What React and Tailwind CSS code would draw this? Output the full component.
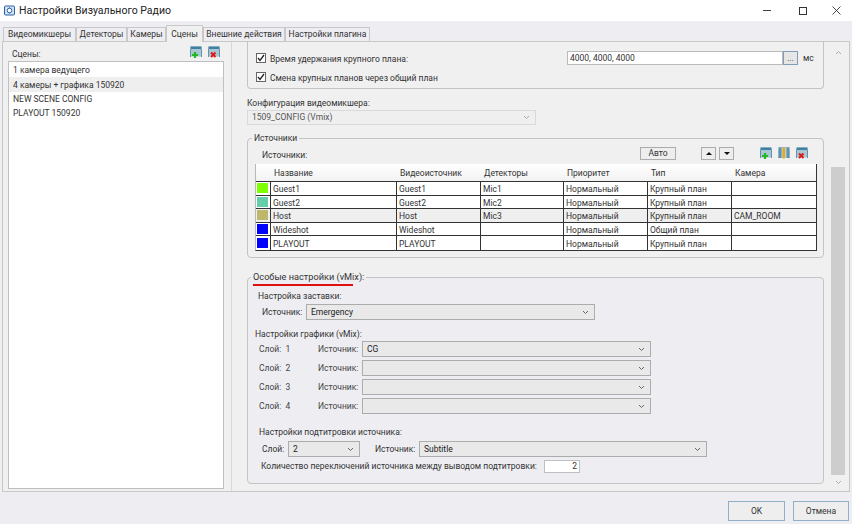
const font = { fontFamily: 'Roboto,"Noto Sans",sans-serif' };

function TableIcon({ kind }) {
  return (
    <svg width="13" height="12" viewBox="0 0 13 12" className="block">
      <rect x="0.500" y="0.500" width="11" height="10" fill="#a9c6d2" />
      <rect x="0.500" y="0.500" width="11" height="2.500" fill="#3f7f9f" />
      <path d="M.5 3v8M11.500 3v8" stroke="#5f93ab" />
      {kind === "add" && <path d="M2 9h6M5 6v6" stroke="#22b822" strokeWidth="2.200" />}
      {kind === "del" && <path d="M3 6.500l4.500 4.500M7.500 6.500L3 11" stroke="#e01818" strokeWidth="2" />}
      {kind === "cols" && (
        <>
          <rect x="0.500" y="0.500" width="11" height="10" fill="#b9d0da" />
          <rect x="1" y="0.500" width="2.500" height="10.500" fill="#5f93ab" />
          <rect x="4.500" y="0.500" width="2.500" height="11" fill="#eaa81c" />
          <rect x="8.500" y="0.500" width="2.500" height="10.500" fill="#5f93ab" />
        </>
      )}
    </svg>
  );
}

function Chevron({ color = "#666" }) {
  return (
    <svg width="7" height="5" viewBox="0 0 7 5" className="block shrink-0">
      <path d="M1 1l2.500 2.500L6 1" fill="none" stroke={color} strokeWidth="1" />
    </svg>
  );
}

function Select({ width, value, disabled }) {
  return (
    <div
      className={`flex items-center justify-between border pl-1 pr-[5px] ${
        disabled ? "border-[#d9d9d9] bg-[#efefef] text-[#555]" : "border-[#acacac] bg-[#e9e9e9] text-[#222]"
      } ${width}`}
    >
      <span className="leading-none">{value}</span>
      <Chevron color={disabled ? "#aaa" : "#666"} />
    </div>
  );
}

function Checkbox() {
  return (
    <span className="flex h-[10px] w-[10px] items-center justify-center border border-[#666] bg-white">
      <svg width="8" height="8" viewBox="0 0 8 8">
        <path d="M1 4l2 2.500L7 1" fill="none" stroke="#222" strokeWidth="1.300" />
      </svg>
    </span>
  );
}

const cols = "grid-cols-[15px_126px_84px_83px_84px_84px_85px]";
const headers = ["", "Название", "Видеоисточник", "Детекторы", "Приоритет", "Тип", "Камера"];
const rows = [
  ["#7fff00", "Guest1", "Guest1", "Mic1", "Нормальный", "Крупный план", ""],
  ["#66cdaa", "Guest2", "Guest2", "Mic2", "Нормальный", "Крупный план", ""],
  ["#bdb76b", "Host", "Host", "Mic3", "Нормальный", "Крупный план", "CAM_ROOM"],
  ["#0000ff", "Wideshot", "Wideshot", "", "Нормальный", "Общий план", ""],
  ["#0000ff", "PLAYOUT", "PLAYOUT", "", "Нормальный", "Крупный план", ""],
];

function SourcesTable() {
  return (
    <div className="ml-[7px] mt-[3px] w-[562px] border-r border-b border-l border-[#333] border-l-[#b8b8b8] bg-white">
      <div className={`grid h-[18px] ${cols} border-b border-[#333] bg-gradient-to-b from-white to-[#f2f2f2]`}>
        {headers.map((h, i) => (
          <div key={i} className="flex items-center pl-[3px] pt-[2px] text-[#333]">{h}</div>
        ))}
      </div>
      {rows.map((r, ri) => (
        <div
          key={ri}
          className={`grid h-[13.5px] ${cols} border-b border-[#333] ${ri === 2 ? "bg-[#efefef]" : "bg-white"} ${ri === 4 ? "border-b-0" : ""}`}
        >
          <div className="flex items-center border-r border-[#333] pl-[1px]">
            <span className="block h-[10px] w-[11px]" style={{ background: r[0] }} />
          </div>
          {r.slice(1).map((c, i) => (
            <div key={i} className={`flex items-center pl-[2px] pt-[2px] leading-none ${i < 5 ? "border-r border-[#333]" : ""}`}>{c}</div>
          ))}
        </div>
      ))}
    </div>
  );
}

function SmallBtn({ children, className = "" }) {
  return (
    <div className={`flex items-center justify-center border border-[#acacac] bg-[#eeeeee] ${className}`}>{children}</div>
  );
}

function GraphicRow({ n, value }) {
  return (
    <div className="flex h-[16px] items-center">
      <span className="ml-[11px] w-[59px] text-[#444]">Слой:&nbsp; {n}</span>
      <span className="w-[44px] text-[#444]">Источник:</span>
      <Select width="w-[289px] h-[16px]" value={value} />
    </div>
  );
}

const tabs = [
  ["Видеомикшеры", "w-[73px]"],
  ["Детекторы", "w-[51px]"],
  ["Камеры", "w-[39px]"],
  ["Сцены", "w-[37px]"],
  ["Внешние действия", "w-[82px]"],
  ["Настройки плагина", "w-[85px]"],
];

export default function App() {
  return (
    <div style={font} className="flex h-[524px] w-[852px] flex-col overflow-hidden bg-[#eeeef2] text-[8.500px] text-[#333]">
      <div className="flex h-[21px] items-center bg-white pl-[4px]">
        <svg width="11" height="11" viewBox="0 0 11 11" className="mr-[4px] block">
          <rect x="0.500" y="1" width="10" height="9" rx="1" fill="#cfe2f5" stroke="#2d62a8" />
          <path d="M5.500 1v9" stroke="#7fa6d0" />
          <circle cx="5.500" cy="5.500" r="2.300" fill="#fff" stroke="#2d62a8" />
        </svg>
        <span className="text-[10.500px] text-[#222]">Настройки Визуального Радио</span>
        <div className="ml-auto flex items-center">
          <span className="mr-[28px] block h-px w-[8px] bg-[#444]" />
          <span className="mr-[25px] block h-[8px] w-[8px] border border-[#333]" />
          <svg width="9" height="9" viewBox="0 0 9 9" className="mr-[11px] block">
            <path d="M.5.500l8 8M8.500.500l-8 8" stroke="#333" strokeWidth="0.900" />
          </svg>
        </div>
      </div>

      <div className="flex h-[20px] items-end pl-[3px]">
        {tabs.map(([t, w]) =>
          t === "Сцены" ? (
            <div key={t} className={`relative z-10 -mb-px flex h-[17px] items-center justify-center border border-b-0 border-[#c8c8c8] bg-[#f0f0f0] ${w}`}>{t}</div>
          ) : (
            <div key={t} className={`flex h-[14px] items-center justify-center border border-b-0 border-[#c8c8c8] bg-[#eeeef2] ${w}`}>{t}</div>
          )
        )}
      </div>

      <div className="mx-[2px] flex h-[451px] border border-[#c8c8c8] bg-[#f0f0f0]">
        <div className="flex w-[229px] flex-col border-r border-[#d8d8d8] pl-[5px] pr-[7px]">
          <div className="flex h-[19px] items-end justify-between pb-[3px]">
            <span className="-mb-[3px] pl-[4px]">Сцены:</span>
            <div className="mr-[3px] flex gap-[5px]">
              <TableIcon kind="add" />
              <TableIcon kind="del" />
            </div>
          </div>
          <div className="h-[428px] border border-[#c0c0c0] bg-white pt-[1px]">
            <div className="flex h-[14px] items-center pl-[4px] pt-[1px] leading-none">1 камера ведущего</div>
            <div className="flex h-[15px] items-center bg-[#efefef] pl-[4px] pt-[1px] leading-none">4 камеры + графика 150920</div>
            <div className="flex h-[14px] items-center pl-[4px] pt-[1px] leading-none">NEW SCENE CONFIG</div>
            <div className="flex h-[14px] items-center pl-[4px] pt-[1px] leading-none">PLAYOUT 150920</div>
          </div>
        </div>

        <div className="flex min-w-0 flex-1 pl-[15px]">
          <div className="w-[577px] shrink-0">
            <div className="flex h-[47px] flex-col rounded-b-sm border-x border-b border-[#c4c4c4]">
              <div className="flex h-[25px] items-center pl-[8px] pt-[7px]">
                <Checkbox />
                <span className="ml-[4px] pt-[2px]">Время удержания крупного плана:</span>
                <div className="ml-auto flex h-[14px] items-center pr-[8px]">
                  <div className="flex h-[14px] w-[216px] items-center border border-[#bbb] bg-white pl-[2px] leading-none">4000, 4000, 4000</div>
                  <div className="flex h-[14px] w-[15px] items-center justify-center border border-[#7f9db9] bg-[#e6e6e6] leading-none">...</div>
                  <span className="ml-[5px] w-[12px]">мс</span>
                </div>
              </div>
              <div className="flex h-[16px] items-center pl-[8px] pt-[4px]">
                <Checkbox />
                <span className="ml-[4px] pt-[2px]">Смена крупных планов через общий план</span>
              </div>
            </div>

            <div className="mt-[8px] h-[12px] leading-[12px]">Конфигурация видеомикшера:</div>
            <div className="mt-[1px]">
              <Select width="w-[289px] h-[15px]" value="1509_CONFIG (Vmix)" disabled />
            </div>

            <fieldset className="mt-[8px] h-[125px] rounded-sm border border-[#c4c4c4]">
              <legend className="ml-[4px] px-[2px] leading-[10px]">Источники</legend>
              <div className="mt-[2px] flex h-[16px] items-center pl-[14px]">
                <span className="w-[46px] pt-[5px]">Источники:</span>
                <SmallBtn className="ml-[332px] h-[13px] w-[36px] pt-[1px]">Авто</SmallBtn>
                <SmallBtn className="ml-[25px] h-[13px] w-[15px]">
                  <span className="block h-0 w-0 border-x-[3px] border-b-[3px] border-x-transparent border-b-[#111]" />
                </SmallBtn>
                <SmallBtn className="ml-[3px] h-[13px] w-[15px]">
                  <span className="block h-0 w-0 border-x-[3px] border-t-[3px] border-x-transparent border-t-[#111]" />
                </SmallBtn>
                <div className="ml-[26px] flex gap-[5px]">
                  <TableIcon kind="add" />
                  <TableIcon kind="cols" />
                  <TableIcon kind="del" />
                </div>
              </div>
              <SourcesTable />
            </fieldset>

            <fieldset className="mt-[14px] h-[212px] rounded-sm border border-[#c4c4c4] bg-[#eeeef2]">
              <legend className="relative ml-[3px] px-[2px] text-[9.200px] leading-[10px]">
                Особые настройки (vMix):
                <span className="absolute bottom-[-4px] left-[2px] h-[2px] w-[100px] bg-[#e01010]" />
              </legend>
              <div>
                <div className="ml-[10px] mt-[8px] h-[12px] leading-[12px]">Настройка заставки:</div>
                <div className="mt-[2px] flex h-[16px] items-center">
                  <span className="ml-[14px] w-[44px]">Источник:</span>
                  <Select width="w-[289px] h-[16px]" value="Emergency" />
                </div>
                <div className="ml-[7px] mt-[8px] h-[12px] leading-[12px]">Настройки графики (vMix):</div>
                <div className="mt-[1px] flex flex-col gap-[3px]">
                  <GraphicRow n="1" value="CG" />
                  <GraphicRow n="2" value="" />
                  <GraphicRow n="3" value="" />
                  <GraphicRow n="4" value="" />
                </div>
                <div className="ml-[11px] mt-[12px] h-[12px] leading-[12px]">Настройки подтитровки источника:</div>
                <div className="mt-[3px] flex h-[16px] items-center">
                  <span className="ml-[14px] w-[26px]">Слой:</span>
                  <Select width="w-[72px] h-[16px]" value="2" />
                  <span className="ml-[15px] w-[44px]">Источник:</span>
                  <Select width="w-[288px] h-[16px]" value="Subtitle" />
                </div>
                <div className="mt-[2px] flex h-[14px] items-center pl-[13px]">
                  <span className="w-[283px] whitespace-nowrap">Количество переключений источника между выводом подтитровки:</span>
                  <div className="flex h-[13px] w-[36px] items-center justify-end border border-[#c0c0c0] bg-white pr-[2px] leading-none">2</div>
                </div>
              </div>
            </fieldset>
          </div>

          <div className="ml-[7px] flex w-[14px] flex-col items-center">
            <div className="flex h-[20px] items-center">
              <svg width="7" height="5" viewBox="0 0 7 5"><path d="M1 4l2.500-2.500L6 4" fill="none" stroke="#aaa" /></svg>
            </div>
            <div className="mt-[105px] h-[308px] w-full bg-[#cdcdcd]" />
            <div className="flex h-[14px] items-center"><Chevron color="#aaa" /></div>
          </div>
        </div>
      </div>

      <div className="flex flex-1 items-start justify-end gap-[8px] pr-[3px] pt-[9px]">
        <div className="flex h-[20px] w-[57px] items-center justify-center border border-[#8fb0c8] bg-[#eeeeee]">OK</div>
        <div className="flex h-[20px] w-[56px] items-center justify-center border border-[#8fb0c8] bg-[#eeeeee]">Отмена</div>
      </div>
    </div>
  );
}
